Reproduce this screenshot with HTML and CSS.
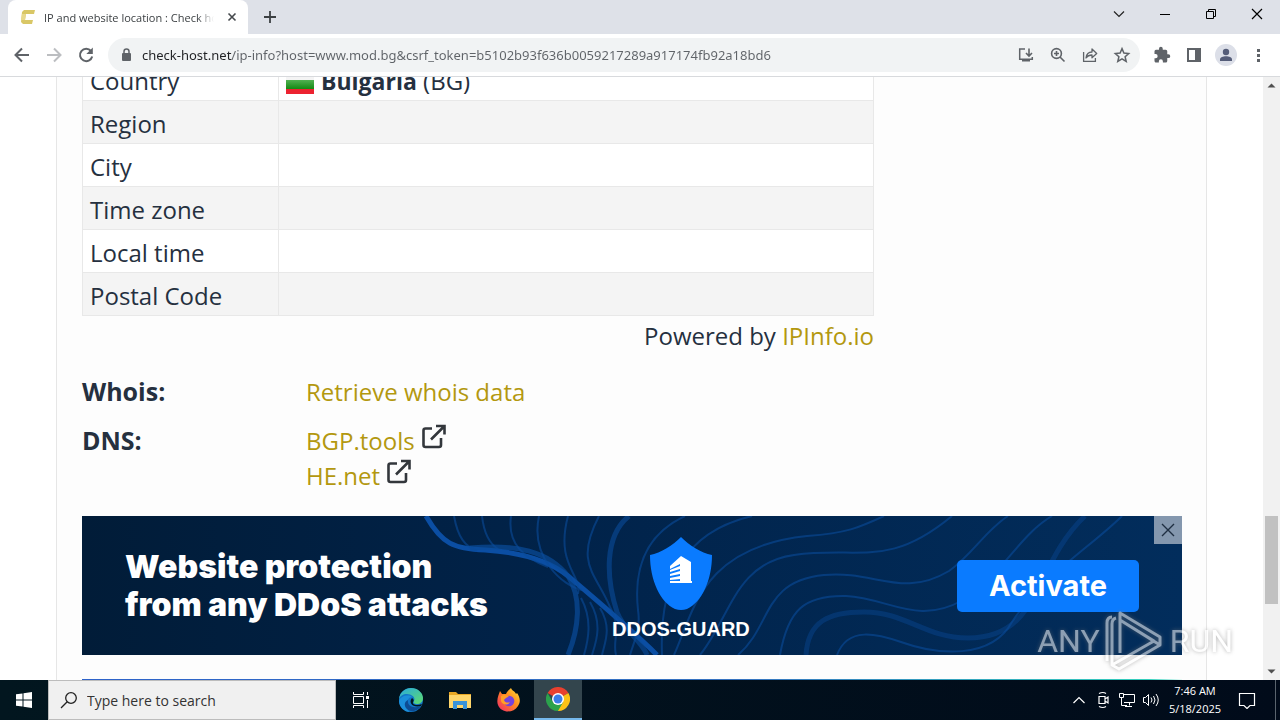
FILE: index.html
```html
<!DOCTYPE html>
<html lang="en">
<head>
<meta charset="UTF-8">
<meta name="viewport" content="width=device-width, initial-scale=1.0">
<title>IP and website location : Check host</title>
<link rel="stylesheet" href="styles.css">
</head>
<body>
<header class="tabs">
  <div class="tab">
    <svg class="favicon" width="16" height="16" viewBox="0 0 16 16"><path d="M4 1h11l-1 4H6L5 11h8l-1 4H3L1 13 2 3z" fill="#d9c766"/><path d="M2 5h4l-1 6H1z" fill="#e8d98e"/></svg>
    <span class="tab-title">IP and website location : Check host</span>
    <button class="tab-close" aria-label="Close tab"><svg width="16" height="16" viewBox="0 0 16 16"><path d="M4.500 4.500l7 7M11.500 4.500l-7 7" stroke="#45494d" stroke-width="1.600"/></svg></button>
  </div>
  <button class="new-tab" aria-label="New tab"><svg width="16" height="16" viewBox="0 0 16 16"><path d="M8 2v12M2 8h12" stroke="#3c4043" stroke-width="1.800"/></svg></button>
  <div class="window-buttons">
    <button aria-label="Search tabs"><svg width="12" height="12" viewBox="0 0 12 12"><path d="M1 3.500l5 5 5-5" fill="none" stroke="#222" stroke-width="1.200"/></svg></button>
    <button aria-label="Minimize"><svg width="12" height="12" viewBox="0 0 12 12"><path d="M1 6.500h10" stroke="#000"/></svg></button>
    <button aria-label="Restore"><svg width="12" height="12" viewBox="0 0 12 12"><path d="M1.500 3.500h7v7h-7zM3.500 3.500v-2h7v7h-2" fill="none" stroke="#000"/></svg></button>
    <button aria-label="Close"><svg width="12" height="12" viewBox="0 0 12 12"><path d="M1 1l10 10M11 1L1 11" stroke="#000" stroke-width="1.200"/></svg></button>
  </div>
</header>

<nav class="toolbar">
  <button aria-label="Back"><svg width="20" height="20" viewBox="0 0 20 20"><path d="M17 10H4M10 3.500L3.500 10l6.500 6.500" fill="none" stroke="#5f6368" stroke-width="2"/></svg></button>
  <button aria-label="Forward"><svg width="20" height="20" viewBox="0 0 20 20"><path d="M3 10h13M10 3.500l6.500 6.500-6.500 6.500" fill="none" stroke="#bcbec1" stroke-width="2"/></svg></button>
  <button aria-label="Reload"><svg width="20" height="20" viewBox="0 0 20 20"><path d="M15 6a6.200 6.200 0 1 0 1.200 5.500" fill="none" stroke="#5f6368" stroke-width="2"/><path d="M16.800 2.500V9h-6.500z" fill="#5f6368"/></svg></button>
  <div class="address">
    <svg width="16" height="16" viewBox="0 0 16 16"><rect x="4" y="6" width="9" height="8" rx="1" fill="#5f6368"/><path d="M6 7V4.500a2.500 2.500 0 0 1 5 0V7" fill="none" stroke="#5f6368" stroke-width="1.500"/></svg>
    <input class="url" type="text" aria-label="Address" value="check-host.net/ip-info?host=www.mod.bg&amp;csrf_token=b5102b93f636b0059217289a917174fb92a18bd6">
    <button aria-label="Install"><svg width="18" height="18" viewBox="0 0 18 18"><path d="M8 3H2.700v10.200h12.600V11" fill="none" stroke="#5f6368" stroke-width="1.500"/><path d="M5 13.500h8v2H5z" fill="#5f6368"/><path d="M12 2.500v7M9 7l3 3 3-3" fill="none" stroke="#5f6368" stroke-width="1.600"/></svg></button>
    <button aria-label="Zoom"><svg width="18" height="18" viewBox="0 0 18 18"><circle cx="7.500" cy="7.500" r="4.900" fill="none" stroke="#5f6368" stroke-width="1.600"/><path d="M11 11l4.500 4.500M7.500 5v5M5 7.500h5" stroke="#5f6368" stroke-width="1.600"/></svg></button>
    <button aria-label="Share"><svg width="18" height="18" viewBox="0 0 18 18"><path d="M2.600 6v9.400h11.800V12" fill="none" stroke="#5f6368" stroke-width="1.300"/><path d="M5 12c.5-4 3-6 6-6V3l4.700 4.500L11 11.700V9c-2.500 0-4.500.8-6 3z" fill="none" stroke="#5f6368" stroke-width="1.300" stroke-linejoin="round"/></svg></button>
    <button aria-label="Bookmark"><svg width="18" height="18" viewBox="0 0 18 18"><path d="M9 2.600l1.900 4.500 4.800.4-3.600 3.200 1.100 4.800L9 12.900l-4.200 2.600 1.100-4.800-3.600-3.200 4.800-.4z" fill="none" stroke="#5f6368" stroke-width="1.500"/></svg></button>
  </div>
  <button aria-label="Extensions"><svg width="18" height="18" viewBox="0 0 24 24"><path d="M20.500 11H19V7a2 2 0 0 0-2-2h-4V3.500a2.500 2.500 0 0 0-5 0V5H4a2 2 0 0 0-2 2v3.800h1.500a2.700 2.700 0 0 1 0 5.400H2V20c0 1.100.9 2 2 2h3.800v-1.500a2.700 2.700 0 0 1 5.400 0V22H17a2 2 0 0 0 2-2v-4h1.500a2.500 2.500 0 0 0 0-5z" fill="#5f6368"/></svg></button>
  <button aria-label="Side panel"><svg width="18" height="18" viewBox="0 0 18 18"><path d="M2 2h14v14H2z" fill="#5f6368"/><path d="M4 4h6v10H4z" fill="#fff"/></svg></button>
  <button aria-label="Profile"><svg width="22" height="22" viewBox="0 0 22 22"><circle cx="11" cy="11" r="11" fill="#dcdfe8"/><circle cx="11" cy="8" r="3.200" fill="#545c78"/><path d="M5 17v-1.500c0-2.200 3-3.300 6-3.300s6 1.100 6 3.300V17z" fill="#545c78"/></svg></button>
  <button aria-label="Menu"><svg width="18" height="18" viewBox="0 0 18 18"><path d="M8 3h3v3H8zM8 8h3v3H8zM8 13h3v3H8z" fill="#5f6368"/></svg></button>
</nav>

<div class="viewport">
  <div class="page">
    <main class="card">
      <table class="info">
        <tr><th scope="row">Country</th><td><svg class="flag" width="28" height="22" viewBox="0 0 28 22"><defs><linearGradient id="green" x2="0" y2="1"><stop offset="0" stop-color="#52b152"/><stop offset="1" stop-color="#138a13"/></linearGradient></defs><path d="M0 0h28v8H0z" fill="#f4f4f4"/><path d="M0 8h28v9H0z" fill="url(#green)"/><path d="M0 17h28v5H0z" fill="#ec2230"/></svg><b>Bulgaria</b> (BG)</td></tr>
        <tr><th scope="row">Region</th><td></td></tr>
        <tr><th scope="row">City</th><td></td></tr>
        <tr><th scope="row">Time zone</th><td></td></tr>
        <tr><th scope="row">Local time</th><td></td></tr>
        <tr><th scope="row">Postal Code</th><td></td></tr>
      </table>
      <p class="powered">Powered by <a href="#">IPInfo.io</a></p>
      <dl class="more">
        <dt>Whois:</dt>
        <dd><a href="#">Retrieve whois data</a></dd>
        <dt>DNS:</dt>
        <dd>
          <a href="#">BGP.tools <svg width="26" height="26" viewBox="0 0 26 26"><path d="M11 4.500H4.500a2 2 0 0 0-2 2V21a2 2 0 0 0 2 2H18a2 2 0 0 0 2-2V14M10 15.500L23 2.500M15 2h8.500v8.500" fill="none" stroke="#33373c" stroke-width="2.600"/></svg></a><br>
          <a href="#">HE.net <svg width="26" height="26" viewBox="0 0 26 26"><path d="M11 4.500H4.500a2 2 0 0 0-2 2V21a2 2 0 0 0 2 2H18a2 2 0 0 0 2-2V14M10 15.500L23 2.500M15 2h8.500v8.500" fill="none" stroke="#33373c" stroke-width="2.600"/></svg></a>
        </dd>
      </dl>

      <section class="banner">
        <svg class="waves" viewBox="0 0 1100 139" preserveAspectRatio="none" fill="none" stroke="#0a4b9a">
          <g stroke-width="5">
            <path d="M344 0C360 28 372 33 403 34C434 36 465 43 486 60C512 82 550 114 575 139" stroke="#0b4ea3"/>
            <path d="M388 32C435 28 466 35 486 60C500 82 497 112 486 139" opacity=".7"/>
            <path d="M547 0C522 20 524 62 535 96C542 115 560 125 565 139" opacity=".6"/>
            <path d="M724 139C726 105 747 96 782 96C824 96 843 122 886 122C960 122 950 50 1003 0" opacity=".4"/>
          </g>
          <g stroke-width="2" opacity=".6">
            <path d="M372 0C376 22 383 30 395 35"/>
            <path d="M400 0C402 18 408 28 416 33"/>
            <path d="M429 0C425 28 442 42 466 51"/>
            <path d="M457 0C448 42 481 70 500 74"/>
            <path d="M486 0C473 49 500 58 496 78"/>
            <path d="M517 0C492 48 514 57 528 91C540 113 530 125 534 139"/>
            <path d="M603 0C560 20 552 57 556 94C559 113 552 125 548 139"/>
            <path d="M670 0C602 16 577 65 580 139"/>
            <path d="M592 139C612 94 620 31 725 20C765 17 776 12 802 0"/>
            <path d="M618 139C648 102 653 47 712 39C778 30 806 53 870 0"/>
            <path d="M656 139C690 110 680 65 742 59C792 54 820 83 867 55C890 39 903 15 926 0"/>
            <path d="M698 139C706 94 722 79 764 80C807 82 835 110 881 84C920 60 936 20 970 0"/>
            <path d="M755 139C766 110 795 118 819 126C855 139 909 144 930 106C960 60 1010 30 1040 0"/>
            <path d="M499 82C511 104 506 125 502 139M508 86C521 108 514 126 510 139M518 92C530 112 523 126 520 139"/>
          </g>
        </svg>
        <h2 class="banner-title">Website protection<br>from any DDoS attacks</h2>
        <div class="guard">
          <svg width="64" height="73" viewBox="0 0 64 73"><path d="M32 0C40 8 52 16 63 18C63 43 53 65 38 72q-6 2-12 0C11 65 1 43 1 18C12 16 24 8 32 0z" fill="#0a7bff"/><path d="M32 19l10 6v19h1v2H21v-2h10v-2l-10 1v-2l10-2v-2l-10 2v-2l10-3v-2l-10 3v-2l10-4v-2l-10 5v-3z" fill="#fff"/></svg>
          <span>DDOS-GUARD</span>
        </div>
        <button class="activate">Activate</button>
        <button class="banner-close" aria-label="Close ad"><svg width="14" height="14" viewBox="0 0 14 14"><path d="M1 1l12 12M13 1L1 13" stroke="#1f2f42" stroke-width="1.400"/></svg></button>
      </section>
      <section class="next-banner"></section>
    </main>
  </div>
  <div class="scrollbar">
    <svg width="17" height="17" viewBox="0 0 17 17"><path d="M4.500 10.500h8l-4-4z" fill="#505050"/></svg>
    <div class="thumb"></div>
    <svg width="17" height="17" viewBox="0 0 17 17"><path d="M4.500 6.500h8l-4 4z" fill="#505050"/></svg>
  </div>
  <div class="watermark">
    <span>ANY</span>
    <svg width="60" height="62" viewBox="0 0 60 62" fill="none" stroke="#fff" stroke-width="3" stroke-linejoin="round"><path d="M15 3l40 24v8L15 10zM15 3v40M15 10l34 21L7 55V14q0-5 4-6M2 51V13q0-6 5-6M7 55l7 4 41-24"/></svg>
    <span>RUN</span>
  </div>
</div>

<footer class="taskbar">
  <button class="start" aria-label="Start"><svg width="16" height="16" viewBox="0 0 16 16"><path d="M0 2.300L6.500 1.400v6.100H0zM7.500 1.200L16 0v7.500H7.500zM0 8.500h6.500v6.100L0 13.700zM7.500 8.500H16V16l-8.500-1.200z" fill="#fff"/></svg></button>
  <label class="search">
    <svg width="18" height="18" viewBox="0 0 18 18"><circle cx="11" cy="7" r="5.300" fill="none" stroke="#222" stroke-width="1.300"/><path d="M7.200 10.800L1 17" stroke="#222" stroke-width="1.300"/></svg>
    <input type="text" aria-label="Search" placeholder="Type here to search">
  </label>
  <div class="apps">
    <button aria-label="Task view"><svg width="18" height="16" viewBox="0 0 18 16"><path d="M1.500 0v2.500h10V0M1.500 16v-2.500h10V16M1.500 4.500h10v7h-10zM15.500 0v3M15.500 8v8" fill="none" stroke="#fff"/><path d="M14 4h3v3h-3z" fill="#fff"/></svg></button>
    <button aria-label="Edge"><svg width="24" height="24" viewBox="0 0 24 24"><defs><linearGradient id="edge" x2="1" y2="1"><stop offset="0" stop-color="#28a9e0"/><stop offset="1" stop-color="#5fdc6b"/></linearGradient></defs><circle cx="12" cy="12" r="12" fill="#1276c8"/><path d="M0 11C1 4 6 0 12 0c7 0 12 5 12 10 0 4-3 6-6 6-3 0-4-1-3-3 2-4-3-7-7-7-4 0-7 2-8 5z" fill="url(#edge)"/><path d="M8 15c0-3 2-6 5-6-3-3-12-1-13 4 0 6 5 11 11 11-2-1-4-5-3-9z" fill="#1b8fdb"/><path d="M9 12c-1 6 5 9 13 6-3 5-10 7-14 3-4-4-2-8 1-9z" fill="#0d4c93"/><path d="M13 10c2 1 2 3 1 4-1 3 4 4 9 2l-1 2C14 20 9 15 13 10z" fill="#02161f"/></svg></button>
    <button aria-label="File Explorer"><svg width="22" height="20" viewBox="0 0 22 20"><path d="M0 2h7l2 2h13v14H0z" fill="#e9a825"/><path d="M0 5h22v13H0z" fill="#ffd66b"/><path d="M4 11h14v8h-4v-4H8v4H4z" fill="#3a93d8"/></svg></button>
    <button aria-label="Firefox"><svg width="24" height="24" viewBox="0 0 24 24"><defs><linearGradient id="fox" x1="1" x2="0" y2="1"><stop offset="0" stop-color="#ffe43a"/><stop offset=".45" stop-color="#ff8a1e"/><stop offset="1" stop-color="#f0236d"/></linearGradient></defs><path d="M14 0c1 3 4 3 5 6l1-1c3 4 4 9 1 13-5 8-17 7-20-1C-1 12 2 6 3 3l2 3 4 0c1-3 3-4 5-6z" fill="url(#fox)"/><circle cx="12" cy="13" r="5.300" fill="#7442dd"/><path d="M4 8c3-2 6-1 8 1-3 0-4 2-5 3 1 3 4 3 6 2-2 4-8 3-9-1z" fill="#ff9f27"/></svg></button>
    <button class="active" aria-label="Chrome"><svg width="24" height="24" viewBox="0 0 24 24"><path d="M12 12L1.600 6A12 12 0 0 1 22.400 6z" fill="#e8402f"/><path d="M12 12l10.400-6A12 12 0 0 1 12 24z" fill="#fbc116"/><path d="M1.600 6A12 12 0 0 0 12 24l5.200-9L12 12 6.800 15z" fill="#2ba24c"/><circle cx="12" cy="12" r="6" fill="#fff"/><circle cx="12" cy="12" r="4.500" fill="#3b7de9"/></svg></button>
  </div>
  <div class="tray">
    <button aria-label="Hidden icons"><svg width="14" height="14" viewBox="0 0 14 14"><path d="M1.500 10L7 4.500l5.500 5.500" fill="none" stroke="#fff" stroke-width="1.200"/></svg></button>
    <button aria-label="Camera"><svg width="14" height="18" viewBox="0 0 14 18"><path d="M3 5.500h6v7H3zM9 8l3-2v6l-3-2M3 2.500q4-2 7 0M3 15.500q4 2 7 0" fill="none" stroke="#fff" stroke-width="1.200"/></svg></button>
    <button aria-label="Network"><svg width="18" height="16" viewBox="0 0 18 16"><path d="M6 2.500h10.500v8H6M3.500 6v7.500H9M1.500 1.500h4v4h-4zM11.500 10.500v3M7 14.500h7" fill="none" stroke="#fff"/></svg></button>
    <button aria-label="Volume"><svg width="18" height="16" viewBox="0 0 18 16"><path d="M1.500 5.500h2l3-3v11l-3-3h-2zM9 5.500q2 2.500 0 5M11.500 4q3 4 0 8M14 2q4.500 6 0 12" fill="none" stroke="#fff"/></svg></button>
    <time class="clock">7:46 AM<br>5/18/2025</time>
    <button class="notes" aria-label="Notifications"><svg width="18" height="18" viewBox="0 0 18 18"><path d="M1.500 2.500h15v12H12l-3 3-3-3H1.500z" fill="none" stroke="#fff" stroke-width="1.200"/></svg></button>
    <div class="desktop"></div>
  </div>
</footer>
</body>
</html>
```

FILE: styles.css
```css
* {
  box-sizing: border-box;
}
body {
  margin: 0;
  height: 100vh;
  display: flex;
  flex-direction: column;
  overflow: hidden;
  background: #fff;
  color: #25303f;
  font-family: "Open Sans", "Noto Sans", sans-serif;
}
button {
  display: flex;
  align-items: center;
  justify-content: center;
  margin: 0;
  padding: 0;
  border: none;
  background: none;
  cursor: pointer;
}
input {
  min-width: 0;
  padding: 0;
  border: none;
  outline: none;
  background: none;
  font-family: inherit;
}
svg {
  flex: none;
}
a {
  color: #b3980f;
  text-decoration: none;
}

/* tab strip */
.tabs {
  display: flex;
  height: 34px;
  flex: none;
  padding-left: 8px;
  background: #dee1e8;
}
.tab {
  display: flex;
  align-items: center;
  width: 240px;
  padding: 0 8px 0 12px;
  border-radius: 8px 8px 0 0;
  background: #fff;
}
.tab-title {
  flex: 1;
  margin-left: 8px;
  overflow: hidden;
  white-space: nowrap;
  font-size: 11px;
  color: #3c4043;
  -webkit-mask-image: linear-gradient(to right, #000 90%, transparent);
  mask-image: linear-gradient(to right, #000 90%, transparent);
}
.tab-close {
  margin-left: 10px;
}
.new-tab {
  width: 44px;
}
.window-buttons {
  display: flex;
  height: 28px;
  margin-left: auto;
}
.window-buttons button {
  width: 46px;
}

/* toolbar */
.toolbar {
  display: flex;
  align-items: center;
  height: 43px;
  flex: none;
  padding: 0 6px;
  border-bottom: 1px solid #d8dadd;
}
.toolbar button {
  width: 32px;
  height: 32px;
}
.address {
  display: flex;
  align-items: center;
  flex: 1;
  height: 34px;
  margin: 0 6px;
  padding: 0 2px 0 10px;
  border-radius: 17px;
  background: #f1f3f4;
}
.url {
  flex: 1;
  margin-left: 8px;
  font-family: "Noto Sans", sans-serif;
  font-size: 13px;
  color: transparent;
  background: linear-gradient(to right, #202124 90px, #5f6368 90px);
  -webkit-background-clip: text;
  background-clip: text;
}

/* page */
.viewport {
  position: relative;
  display: flex;
  flex: 1;
  min-height: 0;
}
.page {
  flex: 1;
  overflow: hidden;
}
.card {
  max-width: 1151px;
  min-height: 100%;
  margin: -20px auto 0;
  padding: 0 24px 0 25px;
  border: 1px solid #e6e6e6;
  border-width: 0 1px;
  background: #fdfdfd;
  font-size: 24px;
  line-height: 35px;
}
.info {
  width: 72%;
  border-collapse: collapse;
  background: #fff;
}
.info th,
.info td {
  height: 43px;
  padding: 5px 7px 2px;
  border: 1px solid #e8e8e8;
  font-weight: 400;
  line-height: 34px;
  text-align: left;
}
.info th {
  width: 196px;
}
.info tr:nth-child(even) {
  background: #f4f4f4;
}
.info b {
  font-size: 23px;
}
.flag {
  margin-right: 7px;
  vertical-align: -4px;
}
.powered {
  width: 72%;
  margin: 2px 0 21px;
  text-align: right;
}
.more {
  display: grid;
  grid-template-columns: 224px 1fr;
  row-gap: 14px;
  margin: 0 0 23px;
}
.more dt {
  font-size: 25px;
  font-weight: 700;
}
.more dd {
  margin: 0;
}

/* banner */
.banner {
  position: relative;
  display: grid;
  grid-template-columns: 487px 1fr auto;
  align-items: center;
  height: 139px;
  padding: 0 43px;
  background: linear-gradient(to right, #011c38, #01234a 45%, #022d5c);
  color: #fff;
}
.waves {
  position: absolute;
  top: 0;
  left: 0;
  width: 100%;
  height: 100%;
}
.banner-title,
.guard,
.activate {
  position: relative;
}
.banner-title {
  margin: 0;
  font-family: Inter, sans-serif;
  font-size: 32px;
  font-weight: 900;
  line-height: 38px;
}
.guard {
  display: flex;
  flex-direction: column;
  align-items: center;
  justify-self: start;
  gap: 7px;
  padding-top: 7px;
  font-family: "Liberation Sans", Arial, sans-serif;
  font-size: 20px;
  font-weight: 700;
  line-height: 24px;
}
.activate {
  width: 182px;
  height: 52px;
  border-radius: 5px;
  background: #0a7bff;
  color: #fff;
  font-family: Inter, sans-serif;
  font-size: 29px;
  font-weight: 700;
}
.banner-close {
  position: absolute;
  top: 0;
  right: 0;
  width: 28px;
  height: 28px;
  background: #8497ae;
}
.next-banner {
  height: 139px;
  margin-top: 24px;
  background: linear-gradient(to right, #2d62c9, #3673c0 60%, #35d0bd 97%, #eafaf7);
}

.scrollbar {
  display: flex;
  flex-direction: column;
  width: 17px;
  background: #f1f1f1;
}
.thumb {
  height: 88px;
  margin: auto 2px 59px;
  background: #c1c1c1;
}

.watermark {
  position: absolute;
  right: 47px;
  bottom: 8px;
  display: flex;
  align-items: center;
  gap: 5px;
  opacity: 0.55;
  color: #fff;
  font-family: Roboto, sans-serif;
  font-size: 32px;
  font-weight: 400;
  filter: drop-shadow(0 0 2px #777);
}

/* taskbar */
.taskbar {
  display: flex;
  height: 40px;
  flex: none;
  background: linear-gradient(to right, #02161f, #010b1a);
}
.start {
  width: 48px;
}
.search {
  display: flex;
  align-items: center;
  gap: 9px;
  width: 288px;
  padding-left: 11px;
  border: 1px solid #bcbcbc;
  background: #f0f0f0;
}
.search input {
  flex: 1;
  font-size: 14px;
}
.search input::placeholder {
  color: #333;
}
.apps {
  display: flex;
  gap: 1px;
}
.apps button {
  width: 48px;
}
.apps button:first-child {
  width: 50px;
}
.apps .active {
  border-bottom: 2px solid #76b9ed;
  background: #33454d;
}
.tray {
  display: flex;
  margin-left: auto;
}
.tray button {
  width: 24px;
}
.clock {
  width: 64px;
  padding-top: 2px;
  color: #fff;
  font-size: 11px;
  line-height: 18px;
  text-align: center;
}
.tray .notes {
  width: 40px;
}
.desktop {
  width: 5px;
  margin-left: 8px;
  border-left: 1px solid #5a646e;
}
```
